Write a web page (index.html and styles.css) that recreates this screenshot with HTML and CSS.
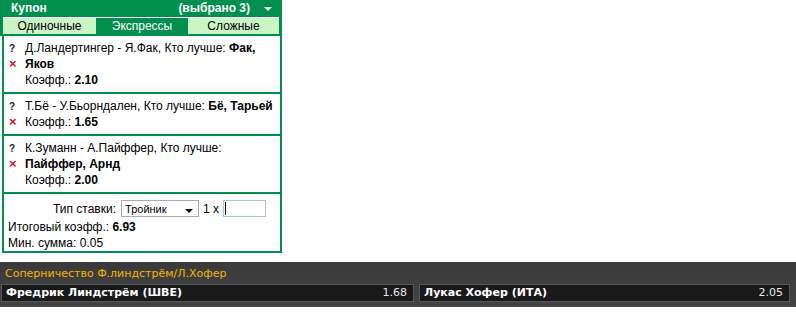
FILE: index.html
```html
<!DOCTYPE html>
<html>
<head>
<meta charset="utf-8">
<link rel="stylesheet" href="styles.css">
</head>
<body>
<div class="coupon">
  <div class="head">
    <span class="title">Купон</span>
    <span class="count">(выбрано 3)</span>
    <span class="arrow"></span>
  </div>
  <div class="tabs">
    <div class="tab">Одиночные</div>
    <div class="tab active">Экспрессы</div>
    <div class="tab">Сложные</div>
  </div>
  <div class="items">
    <div class="item">
      <div class="marks"><span class="q">?</span><span class="x">×</span></div>
      <div class="body">
        <div>Д.Ландертингер - Я.Фак, Кто лучше: <b>Фак, Яков</b></div>
        <div>Коэфф.: <b>2.10</b></div>
      </div>
    </div>
    <div class="item">
      <div class="marks"><span class="q">?</span><span class="x">×</span></div>
      <div class="body">
        <div>Т.Бё - У.Бьорндален, Кто лучше: <b>Бё, Тарьей</b></div>
        <div>Коэфф.: <b>1.65</b></div>
      </div>
    </div>
    <div class="item">
      <div class="marks"><span class="q">?</span><span class="x">×</span></div>
      <div class="body">
        <div>К.Зуманн - А.Пайффер, Кто лучше: <b>Пайффер, Арнд</b></div>
        <div>Коэфф.: <b>2.00</b></div>
      </div>
    </div>
    <div class="bet">
      <div class="bet-row">
        <span class="lbl">Тип ставки:</span>
        <div class="select"><span>Тройник</span><span class="sel-arrow"></span></div>
        <span class="lbl">1 x</span>
        <div class="input"><span class="caret"></span></div>
      </div>
      <div class="sum">Итоговый коэфф.: <b>6.93</b></div>
      <div class="sum">Мин. сумма: 0.05</div>
    </div>
  </div>
</div>
<div class="market">
  <div class="market-title">Соперничество Ф.линдстрём/Л.Хофер</div>
  <div class="odds">
    <div class="odd"><span class="name">Фредрик Линдстрём (ШВЕ)</span><span class="price">1.68</span></div>
    <div class="odd"><span class="name">Лукас Хофер (ИТА)</span><span class="price">2.05</span></div>
  </div>
</div>
</body>
</html>
```
FILE: styles.css
```css
body {
  margin: 0;
  font-family: "Liberation Sans", Arial, sans-serif;
  font-size: 12px;
  color: #000;
  background: #fff;
}
.coupon {
  width: 282px;
}
.head {
  background: #008f4c;
  color: #fff;
  font-weight: bold;
  height: 17px;
  line-height: 17px;
  display: flex;
  padding: 0 10px 0 11px;
}
.head .title {
  flex: 1;
}
.head .arrow {
  width: 0;
  height: 0;
  border-left: 4px solid transparent;
  border-right: 4px solid transparent;
  border-top: 4px solid #fff;
  margin: 7px 0 0 14px;
}
.tabs {
  display: grid;
  grid-template-columns: 93px 92px 91px;
  background: #008f4c;
  padding: 0 3px 2px 3px;
}
.tab {
  background: #ccf5c6;
  text-align: center;
  height: 16px;
  line-height: 16px;
  border-top: 1px solid #fff;
  color: #000;
}
.tab.active {
  background: #008f4c;
  color: #fff;
}
.items {
  margin-left: 2px;
  border-left: 2px solid #008f4c;
  border-right: 2px solid #008f4c;
  border-bottom: 2px solid #008f4c;
}
.item {
  display: flex;
  border-bottom: 2px solid #008f4c;
  padding: 4px 0 4px 5px;
  line-height: 16px;
}
.marks {
  display: flex;
  flex-direction: column;
  width: 10px;
}
.marks .q {
  font-weight: bold;
  font-size: 10px;
  height: 16px;
  line-height: 17px;
  color: #222;
}
.marks .x {
  color: #e0102a;
  font-weight: bold;
  font-size: 13px;
  height: 16px;
  line-height: 16px;
}
.body {
  padding-left: 6px;
  width: 250px;
}
.bet {
  padding: 4px 0 0 4px;
}
.bet-row {
  display: flex;
  align-items: center;
  gap: 4px;
  padding-left: 45px;
  height: 21px;
  white-space: nowrap;
}
.sum {
  line-height: 16px;
}
.lbl {
  flex: none;
}
.select {
  flex: none;
  border: 1px solid #a5acb5;
  display: flex;
  align-items: center;
  justify-content: space-between;
  padding: 0 5px 0 3px;
  box-sizing: border-box;
  width: 78px;
  height: 17px;
  font-size: 11px;
  margin-left: 1px;
}
.sel-arrow {
  width: 0;
  height: 0;
  border-left: 4px solid transparent;
  border-right: 4px solid transparent;
  border-top: 4px solid #000;
  margin-top: 5px;
}
.input {
  flex: none;
  width: 43px;
  height: 17px;
  border: 1px solid #a5c8e6;
  box-sizing: border-box;
  display: flex;
  align-items: center;
  padding-left: 1px;
}
.caret {
  width: 1px;
  height: 13px;
  background: #000;
}
.market {
  margin-top: 9px;
  background: linear-gradient(#3a3a3a, #444);
  height: 45px;
  box-sizing: border-box;
  padding: 4px 6px 0 1px;
  font-family: "DejaVu Sans", Verdana, sans-serif;
  font-size: 11px;
}
.market-title {
  color: #f2b400;
  padding-left: 4px;
  height: 18px;
  line-height: 16px;
}
.odds {
  display: grid;
  grid-template-columns: 413px 1fr;
  gap: 5px;
}
.odd {
  display: flex;
  justify-content: space-between;
  background: #1a1a1a;
  border: 1px solid #555;
  height: 18px;
  line-height: 16px;
  box-sizing: border-box;
  padding: 0 6px 0 4px;
  color: #fff;
}
.odd .name {
  font-weight: bold;
}
.odd .price {
  color: #e8e8e8;
}
```
